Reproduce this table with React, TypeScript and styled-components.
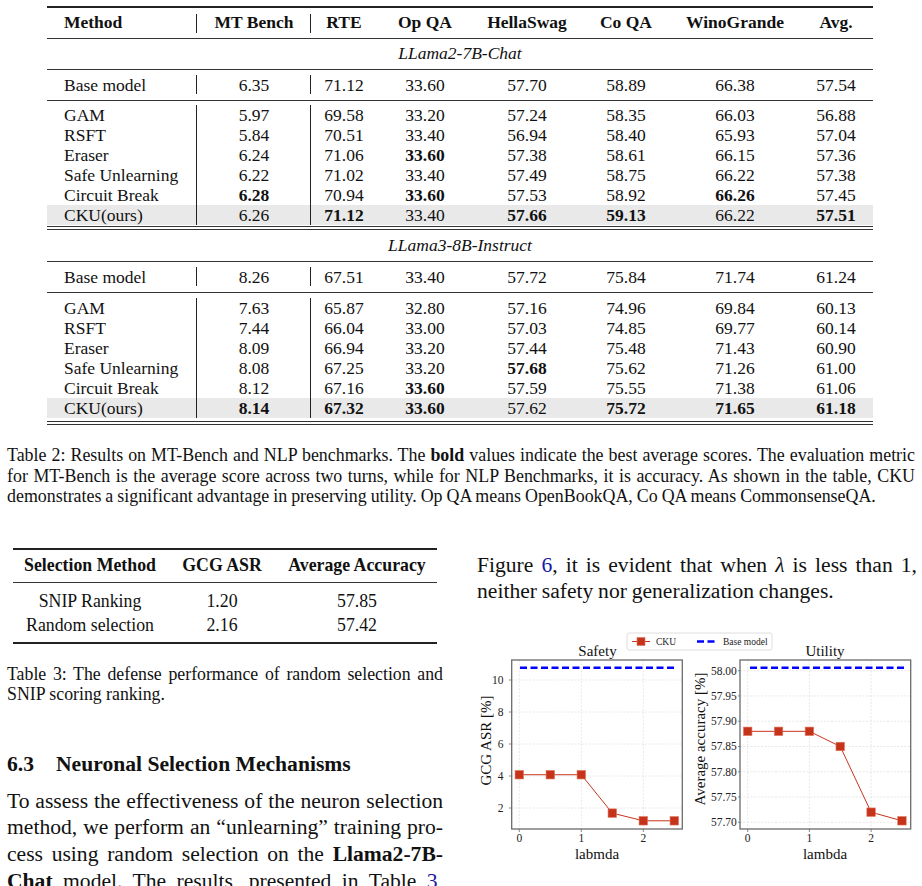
import React from "react";
import styled, { createGlobalStyle } from "styled-components";

const SERIF = `"Liberation Serif", "Times New Roman", Times, serif`;

const Global = createGlobalStyle`
  html, body { margin: 0; padding: 0; background: #fff; overflow: hidden; }
  body { font-family: ${SERIF}; color: #111; }
`;

const Page = styled.div`
  width: 922px;
  height: 886px;
  overflow: hidden;
  box-sizing: border-box;
  font-family: ${SERIF};
`;

/* ---------- Table 2 ---------- */
const BenchTable = styled.table`
  width: 826px;
  margin: 6px 0 0 47px;
  border-collapse: collapse;
  table-layout: fixed;
  font-family: ${SERIF};
  font-size: 17.5px;
  color: #111;
`;

const HeadRow = styled.tr`
  height: 31px;
  border-top: 2px solid #222;
  border-bottom: 1.5px solid #333;
`;

const HeadCell = styled.th<{ $sep?: boolean; $left?: boolean }>`
  font-weight: bold;
  text-align: ${(p) => (p.$left ? "left" : "center")};
  padding: 0 0 2px ${(p) => (p.$left ? "17px" : "0")};
  line-height: 20px;
  background: ${(p) =>
    p.$sep ? "linear-gradient(#222, #222) right 6px / 1px 19px no-repeat" : "none"};
`;

const GroupRow = styled.tr<{ $double?: boolean; $h: number }>`
  height: ${(p) => p.$h}px;
  border-top: ${(p) => (p.$double ? "4px double #333" : "none")};
  border-bottom: 1.5px solid #333;
`;

const GroupCell = styled.td<{ $lift: number }>`
  text-align: center;
  font-style: italic;
  padding: 0 0 ${(p) => p.$lift}px 0;
  line-height: 20px;
`;

const BaseRow = styled.tr`
  height: 31px;
  border-bottom: 1.5px solid #333;
`;

const DataRow = styled.tr<{ $hl?: boolean }>`
  height: 20px;
  background: ${(p) => (p.$hl ? "#e9e9e9" : "transparent")};
`;

const Cell = styled.td<{ $sep?: "full" | "short"; $left?: boolean; $bold?: boolean }>`
  padding: 0 0 0 ${(p) => (p.$left ? "17px" : "0")};
  text-align: ${(p) => (p.$left ? "left" : "center")};
  font-weight: ${(p) => (p.$bold ? "bold" : "normal")};
  line-height: 20px;
  white-space: nowrap;
  background: ${(p) =>
    p.$sep === "full"
      ? "linear-gradient(#222, #222) right top / 1px 100% no-repeat"
      : p.$sep === "short"
      ? "linear-gradient(#222, #222) right center / 1px 19px no-repeat"
      : "none"};
`;

const SpacerRow = styled.tr<{ $h: number; $double?: boolean }>`
  height: ${(p) => p.$h}px;
  border-bottom: ${(p) => (p.$double ? "4px double #333" : "none")};
  & > td { padding: 0; }
`;

const Caption = styled.div`
  margin: 20px 0 0 7px;
  width: 908px;
  font-family: ${SERIF};
  font-size: 17.9px;
  line-height: 20.5px;
  word-spacing: -0.5px;
  color: #111;
`;

const JLine = styled.span<{ $last?: boolean }>`
  display: block;
  white-space: nowrap;
  text-align: ${(p) => (p.$last ? "left" : "justify")};
  text-align-last: ${(p) => (p.$last ? "left" : "justify")};
`;

/* ---------- Lower columns ---------- */
const Columns = styled.div`
  display: grid;
  grid-template-columns: 436px 440px;
  column-gap: 34px;
  margin: 41px 0 0 7px;
  align-items: start;
`;

const LeftCol = styled.div`
  display: flex;
  flex-direction: column;
`;

const RightCol = styled.div`
  display: flex;
  flex-direction: column;
`;

const AblTable = styled.table`
  width: 424px;
  margin-left: 6px;
  border-collapse: collapse;
  table-layout: fixed;
  font-family: ${SERIF};
  font-size: 17.8px;
  color: #111;
  border-top: 2px solid #222;
  border-bottom: 2px solid #222;
`;

const AblHead = styled.tr`
  height: 34px;
  border-bottom: 1.2px solid #333;
  & > th { font-weight: bold; text-align: center; padding: 0; }
`;

const AblPad = styled.tr<{ $h: number }>`
  height: ${(p) => p.$h}px;
  & > td { padding: 0; }
`;

const AblRow = styled.tr`
  height: 24px;
  & > td { text-align: center; padding: 0; line-height: 24px; }
`;

const SmallCaption = styled.div`
  margin-top: 20px;
  font-size: 17.8px;
  line-height: 20px;
  color: #111;
`;

const Heading = styled.h3`
  margin: 48px 0 0 0;
  font-family: ${SERIF};
  font-size: 21.6px;
  font-weight: bold;
  line-height: 24px;
  display: flex;
`;

const SecNum = styled.span`
  width: 49px;
`;

const Para = styled.div<{ $top: number }>`
  margin-top: ${(p) => p.$top}px;
  font-size: 21.6px;
  line-height: 26.7px;
  word-spacing: -0.6px;
  color: #111;
`;

const Link = styled.span`
  color: #1a1aa6;
`;

/* ---------- Chart ---------- */
const ChartSvg = styled.svg`
  display: block;
  margin: 24px 0 0 0;
  width: 445px;
  height: 260px;
  overflow: visible;
`;

const TickText = styled.text`
  font-family: ${SERIF};
  font-size: 11.5px;
  fill: #222;
`;

const AxisText = styled.text`
  font-family: ${SERIF};
  font-size: 15px;
  fill: #111;
`;

const LegendText = styled.text`
  font-family: ${SERIF};
  font-size: 9.5px;
  fill: #222;
`;

const RED = "#c8341c";
const MARK = "#c4331a";

type Row = { name: string; v: string[]; b?: number[] };

const llama2: Row[] = [
  { name: "GAM", v: ["5.97", "69.58", "33.20", "57.24", "58.35", "66.03", "56.88"] },
  { name: "RSFT", v: ["5.84", "70.51", "33.40", "56.94", "58.40", "65.93", "57.04"] },
  { name: "Eraser", v: ["6.24", "71.06", "33.60", "57.38", "58.61", "66.15", "57.36"], b: [2] },
  { name: "Safe Unlearning", v: ["6.22", "71.02", "33.40", "57.49", "58.75", "66.22", "57.38"] },
  { name: "Circuit Break", v: ["6.28", "70.94", "33.60", "57.53", "58.92", "66.26", "57.45"], b: [0, 2, 5] },
  { name: "CKU(ours)", v: ["6.26", "71.12", "33.40", "57.66", "59.13", "66.22", "57.51"], b: [1, 3, 4, 6] },
];

const llama3: Row[] = [
  { name: "GAM", v: ["7.63", "65.87", "32.80", "57.16", "74.96", "69.84", "60.13"] },
  { name: "RSFT", v: ["7.44", "66.04", "33.00", "57.03", "74.85", "69.77", "60.14"] },
  { name: "Eraser", v: ["8.09", "66.94", "33.20", "57.44", "75.48", "71.43", "60.90"] },
  { name: "Safe Unlearning", v: ["8.08", "67.25", "33.20", "57.68", "75.62", "71.26", "61.00"], b: [3] },
  { name: "Circuit Break", v: ["8.12", "67.16", "33.60", "57.59", "75.55", "71.38", "61.06"], b: [2] },
  { name: "CKU(ours)", v: ["8.14", "67.32", "33.60", "57.62", "75.72", "71.65", "61.18"], b: [0, 1, 2, 4, 5, 6] },
];

const colWidths = [150, 114, 66, 96, 108, 90, 128, 74];
const headers = ["Method", "MT Bench", "RTE", "Op QA", "HellaSwag", "Co QA", "WinoGrande", "Avg."];

const sepFor = (i: number, kind: "full" | "short") => (i < 2 ? kind : undefined);

const Group: React.FC<{ title: string; base: string[]; rows: Row[]; first?: boolean }> = ({
  title,
  base,
  rows,
  first,
}) => (
  <tbody>
    <GroupRow $double={!first} $h={first ? 31 : 33}>
      <GroupCell colSpan={8} $lift={first ? 2 : 0}>
        {title}
      </GroupCell>
    </GroupRow>
    <BaseRow>
      <Cell $left $sep="short">Base model</Cell>
      {base.map((x, i) => (
        <Cell key={i} $sep={sepFor(i + 1, "short")}>
          {x}
        </Cell>
      ))}
    </BaseRow>
    <SpacerRow $h={first ? 5 : 6}>
      <td colSpan={8} />
    </SpacerRow>
    {rows.map((r, ri) => (
      <DataRow key={r.name} $hl={ri === rows.length - 1}>
        <Cell $left $sep="full">
          {r.name}
        </Cell>
        {r.v.map((x, i) => (
          <Cell key={i} $sep={sepFor(i + 1, "full")} $bold={r.b?.includes(i)}>
            {x}
          </Cell>
        ))}
      </DataRow>
    ))}
    <SpacerRow $h={3}>
      <td colSpan={8} />
    </SpacerRow>
  </tbody>
);

const Chart: React.FC = () => {
  const xs = (l: number) => 519.3 + 62 * l;
  const ys = (v: number) => 809 - (v - 2) * 16;
  const xu = (l: number) => 747.7 + 61.7 * l;
  const yu = (v: number) => 823.3 - (v - 57.7) * 505.4;
  const lam = [0, 0.5, 1, 1.5, 2, 2.5];
  const safety = [4.08, 4.08, 4.08, 1.68, 1.2, 1.2];
  const util = [57.88, 57.88, 57.88, 57.85, 57.72, 57.703];
  const sPts = lam.map((l, i) => [xs(l), ys(safety[i])]);
  const uPts = lam.map((l, i) => [xu(l), yu(util[i])]);
  const sq = 8.5;
  const grid = "#e2e2e2";
  const frame = "#6a6a6a";
  const uTicks = [57.7, 57.75, 57.8, 57.85, 57.9, 57.95, 58.0];
  return (
    <ChartSvg viewBox="477 630 445 260">
      {/* legend */}
      <rect x={627} y={634} width={145} height={17} rx={2} fill="#fff" stroke="#d6d6d6" strokeWidth={0.8} />
      <line x1={632} y1={642.5} x2={650} y2={642.5} stroke={RED} strokeWidth={1} />
      <rect x={641 - 4} y={642.5 - 4} width={8} height={8} fill={MARK} stroke="#e07a62" strokeWidth={0.6} />
      <LegendText x={656} y={646}>CKU</LegendText>
      <line x1={697} y1={642.5} x2={716} y2={642.5} stroke="#0000ff" strokeWidth={2.4} strokeDasharray="7 3.5" />
      <LegendText x={723} y={646}>Base model</LegendText>

      {/* Safety panel */}
      <AxisText x={597.5} y={656.5} textAnchor="middle">Safety</AxisText>
      {[0, 1, 2].map((l) => (
        <line key={"sgx" + l} x1={xs(l)} y1={661} x2={xs(l)} y2={830} stroke={grid} strokeWidth={0.8} strokeDasharray="2 1.5" />
      ))}
      {[2, 4, 6, 8, 10].map((v) => (
        <line key={"sgy" + v} x1={511.7} y1={ys(v)} x2={682.3} y2={ys(v)} stroke={grid} strokeWidth={0.8} strokeDasharray="2 1.5" />
      ))}
      <rect x={511.7} y={661} width={170.6} height={169} fill="none" stroke={frame} strokeWidth={1.3} />
      {[2, 4, 6, 8, 10].map((v) => (
        <g key={"sty" + v}>
          <line x1={509} y1={ys(v)} x2={511.7} y2={ys(v)} stroke={frame} strokeWidth={0.8} />
          <TickText x={503.5} y={ys(v) + 4} textAnchor="end">{v}</TickText>
        </g>
      ))}
      {[0, 1, 2].map((l) => (
        <g key={"stx" + l}>
          <line x1={xs(l)} y1={830} x2={xs(l)} y2={833} stroke={frame} strokeWidth={0.8} />
          <TickText x={xs(l)} y={843} textAnchor="middle">{l}</TickText>
        </g>
      ))}
      <line x1={520} y1={668.7} x2={676} y2={668.7} stroke="#0000ff" strokeWidth={2.4} strokeDasharray="7 3.5" />
      <polyline points={sPts.map((p) => p.join(",")).join(" ")} fill="none" stroke={RED} strokeWidth={1} />
      {sPts.map(([x, y], i) => (
        <rect key={"sm" + i} x={x - sq / 2} y={y - sq / 2} width={sq} height={sq} fill={MARK} stroke="#e07a62" strokeWidth={0.6} />
      ))}
      <AxisText x={597} y={859.5} textAnchor="middle">labmda</AxisText>
      <AxisText x={0} y={0} textAnchor="middle" transform="translate(490.5 741.5) rotate(-90)">
        GCG ASR [%]
      </AxisText>

      {/* Utility panel */}
      <AxisText x={825} y={656.5} textAnchor="middle">Utility</AxisText>
      {[0, 1, 2].map((l) => (
        <line key={"ugx" + l} x1={xu(l)} y1={661} x2={xu(l)} y2={830} stroke={grid} strokeWidth={0.8} strokeDasharray="2 1.5" />
      ))}
      {uTicks.map((v) => (
        <line key={"ugy" + v} x1={740} y1={yu(v)} x2={910.7} y2={yu(v)} stroke={grid} strokeWidth={0.8} strokeDasharray="2 1.5" />
      ))}
      <rect x={740} y={661} width={170.7} height={169} fill="none" stroke={frame} strokeWidth={1.3} />
      {uTicks.map((v) => (
        <g key={"uty" + v}>
          <line x1={738} y1={yu(v)} x2={740} y2={yu(v)} stroke={frame} strokeWidth={0.8} />
          <TickText x={736.8} y={yu(v) + 4} textAnchor="end">{v.toFixed(2)}</TickText>
        </g>
      ))}
      {[0, 1, 2].map((l) => (
        <g key={"utx" + l}>
          <line x1={xu(l)} y1={830} x2={xu(l)} y2={833} stroke={frame} strokeWidth={0.8} />
          <TickText x={xu(l)} y={843} textAnchor="middle">{l}</TickText>
        </g>
      ))}
      <line x1={750} y1={668.7} x2={904} y2={668.7} stroke="#0000ff" strokeWidth={2.4} strokeDasharray="7 3.5" />
      <polyline points={uPts.map((p) => p.join(",")).join(" ")} fill="none" stroke={RED} strokeWidth={1} />
      {uPts.map(([x, y], i) => (
        <rect key={"um" + i} x={x - sq / 2} y={y - sq / 2} width={sq} height={sq} fill={MARK} stroke="#e07a62" strokeWidth={0.6} />
      ))}
      <AxisText x={825} y={859.5} textAnchor="middle">lambda</AxisText>
      <AxisText x={0} y={0} textAnchor="middle" transform="translate(705 740) rotate(-90)">
        Average accuracy [%]
      </AxisText>
    </ChartSvg>
  );
};

export default function App() {
  return (
    <Page>
      <Global />
      <BenchTable>
        <colgroup>
          {colWidths.map((w, i) => (
            <col key={i} style={{ width: w }} />
          ))}
        </colgroup>
        <thead>
          <HeadRow>
            {headers.map((h, i) => (
              <HeadCell key={h} $left={i === 0} $sep={i < 2}>
                {h}
              </HeadCell>
            ))}
          </HeadRow>
        </thead>
        <Group
          first
          title="LLama2-7B-Chat"
          base={["6.35", "71.12", "33.60", "57.70", "58.89", "66.38", "57.54"]}
          rows={llama2}
        />
        <Group
          title="LLama3-8B-Instruct"
          base={["8.26", "67.51", "33.40", "57.72", "75.84", "71.74", "61.24"]}
          rows={llama3}
        />
        <tbody>
          <SpacerRow $h={0} $double>
            <td colSpan={8} />
          </SpacerRow>
        </tbody>
      </BenchTable>

      <Caption>
        <JLine>
          Table 2: Results on MT-Bench and NLP benchmarks. The <b>bold</b> values indicate the best average scores. The
          evaluation metric
        </JLine>
        <JLine>
          for MT-Bench is the average score across two turns, while for NLP Benchmarks, it is accuracy. As shown in the
          table, CKU
        </JLine>
        <JLine $last>
          demonstrates a significant advantage in preserving utility. Op QA means OpenBookQA, Co QA means
          CommonsenseQA.
        </JLine>
      </Caption>

      <Columns>
        <LeftCol>
          <AblTable>
            <colgroup>
              <col style={{ width: 154 }} />
              <col style={{ width: 110 }} />
              <col style={{ width: 160 }} />
            </colgroup>
            <thead>
              <AblHead>
                <th>Selection Method</th>
                <th>GCG ASR</th>
                <th>Average Accuracy</th>
              </AblHead>
            </thead>
            <tbody>
              <AblPad $h={6}>
                <td colSpan={3} />
              </AblPad>
              <AblRow>
                <td>SNIP Ranking</td>
                <td>1.20</td>
                <td>57.85</td>
              </AblRow>
              <AblRow>
                <td>Random selection</td>
                <td>2.16</td>
                <td>57.42</td>
              </AblRow>
              <AblPad $h={6}>
                <td colSpan={3} />
              </AblPad>
            </tbody>
          </AblTable>
          <SmallCaption>
            <JLine>Table 3: The defense performance of random selection and</JLine>
            <JLine $last>SNIP scoring ranking.</JLine>
          </SmallCaption>
          <Heading>
            <SecNum>6.3</SecNum>
            <span>Neuronal Selection Mechanisms</span>
          </Heading>
          <Para $top={12}>
            <JLine>To assess the effectiveness of the neuron selection</JLine>
            <JLine>method, we perform an “unlearning” training pro-</JLine>
            <JLine>
              cess using random selection on the <b>Llama2-7B-</b>
            </JLine>
            <JLine>
              <b>Chat</b> model. The results, presented in Table <Link>3</Link>,
            </JLine>
          </Para>
        </LeftCol>
        <RightCol>
          <Para $top={4}>
            <JLine>
              Figure <Link>6</Link>, it is evident that when <i>λ</i> is less than 1,
            </JLine>
            <JLine $last>neither safety nor generalization changes.</JLine>
          </Para>
          <Chart />
        </RightCol>
      </Columns>
    </Page>
  );
}
